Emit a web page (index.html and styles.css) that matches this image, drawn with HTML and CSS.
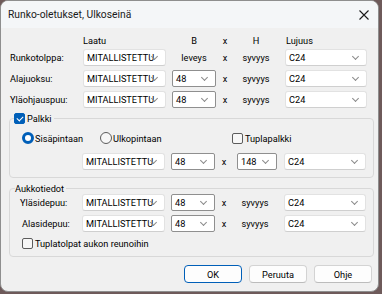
FILE: index.html
```html
<!DOCTYPE html>
<html>
<head>
  <title>Runko-oletukset, Ulkoseinä</title>
  <link rel="stylesheet" href="styles.css">
</head>
<body>
  <div class="window">
    <div class="titlebar">
      <span class="title">Runko-oletukset, Ulkoseinä</span>
      <svg class="close" width="10" height="10" viewBox="0 0 10 10">
        <path d="M0.5 0.5 L9.5 9.5 M9.5 0.5 L0.5 9.5" stroke="#1a1a1a" stroke-width="1.1" fill="none"/>
      </svg>
    </div>

    <div class="client">
      <div class="row head-row outer">
        <span></span>
        <span>Laatu</span>
        <span class="center b-col">B</span>
        <span class="center x-col">x</span>
        <span class="center h-col">H</span>
        <span class="head-lujuus">Lujuus</span>
      </div>

      <div class="row first outer">
        <span class="label">Runkotolppa:</span>
        <div class="combo">MITALLISTETTU<i class="chev"></i></div>
        <span class="center b-col">leveys</span>
        <span class="center x-col">x</span>
        <span class="center h-col">syvyys</span>
        <div class="c-col"><div class="combo">C24<i class="chev"></i></div></div>
      </div>

      <div class="row outer">
        <span class="label">Alajuoksu:</span>
        <div class="combo">MITALLISTETTU<i class="chev"></i></div>
        <div class="b-col"><div class="combo edit">48<i class="chev"></i></div></div>
        <span class="center x-col">x</span>
        <span class="center h-col">syvyys</span>
        <div class="c-col"><div class="combo">C24<i class="chev"></i></div></div>
      </div>

      <div class="row outer">
        <span class="label">Yläohjauspuu:</span>
        <div class="combo">MITALLISTETTU<i class="chev"></i></div>
        <div class="b-col"><div class="combo edit">48<i class="chev"></i></div></div>
        <span class="center x-col">x</span>
        <span class="center h-col">syvyys</span>
        <div class="c-col"><div class="combo">C24<i class="chev"></i></div></div>
      </div>

      <fieldset class="group group-palkki">
        <legend class="legend"><span class="check on"></span>Palkki</legend>
        <div class="options">
          <span class="opt opt-1"><span class="radio on"></span>Sisäpintaan</span>
          <span class="opt opt-2"><span class="radio"></span>Ulkopintaan</span>
          <span class="opt"><span class="check"></span>Tuplapalkki</span>
        </div>
        <div class="row palkki-row">
          <span></span>
          <div class="combo">MITALLISTETTU<i class="chev"></i></div>
          <div class="b-col"><div class="combo edit">48<i class="chev"></i></div></div>
          <span class="center x-col">x</span>
          <div class="combo edit">148<i class="chev"></i></div>
          <div class="c-col"><div class="combo">C24<i class="chev"></i></div></div>
        </div>
      </fieldset>

      <fieldset class="group group-aukko">
        <legend class="legend text-only">Aukkotiedot</legend>
        <div class="row first-in">
          <span class="label indent">Yläsidepuu:</span>
          <div class="combo">MITALLISTETTU<i class="chev"></i></div>
          <div class="b-col"><div class="combo edit">48<i class="chev"></i></div></div>
          <span class="center x-col">x</span>
          <span class="center h-col">syvyys</span>
          <div class="c-col"><div class="combo">C24<i class="chev"></i></div></div>
        </div>
        <div class="row">
          <span class="label indent2">Alasidepuu:</span>
          <div class="combo">MITALLISTETTU<i class="chev"></i></div>
          <div class="b-col"><div class="combo edit">48<i class="chev"></i></div></div>
          <span class="center x-col">x</span>
          <span class="center h-col">syvyys</span>
          <div class="c-col"><div class="combo">C24<i class="chev"></i></div></div>
        </div>
        <div class="tupla">
          <span class="opt"><span class="check"></span>Tuplatolpat aukon reunoihin</span>
        </div>
      </fieldset>

      <div class="buttons">
        <button class="btn default">OK</button>
        <button class="btn">Peruuta</button>
        <button class="btn">Ohje</button>
      </div>
    </div>
  </div>
</body>
</html>
```

FILE: styles.css
```css
* {
  margin: 0;
  padding: 0;
  box-sizing: border-box;
}

body {
  background: #6e5a5a;
  font-family: Roboto, "Liberation Sans", sans-serif;
  font-size: 9.2px;
  color: #000;
}

.window {
  width: 379px;
  height: 292px;
  background: #f0f0f0;
  border: 1px solid #8e8e8e;
  border-radius: 8px;
  overflow: hidden;
}

.titlebar {
  height: 27px;
  background: #f4f6f8;
  display: flex;
  align-items: center;
  justify-content: space-between;
  padding: 0 9px 0 7px;
}

.title {
  font-size: 10.3px;
  color: #1a1a1a;
}

.close {
  display: block;
}

.client {
  padding: 3px 0 0 8px;
}

/* form rows */
.row {
  display: grid;
  grid-template-columns: 72px 83px 50px 22px 40px 89px;
  align-items: center;
  height: 17px;
  margin-top: 4px;
}

.row.outer {
  grid-template-columns: 73px 83px 50px 22px 40px 89px;
  padding-left: 1px;
}

.head-row {
  height: 18px;
  margin-top: 0;
}

.row.first {
  margin-top: 0;
}

.label {
  white-space: nowrap;
}

.label.indent {
  padding-left: 10px;
}

.label.indent2 {
  padding-left: 12px;
}

.center {
  text-align: center;
}

.b-col {
  padding-left: 6px;
}

.x-col {
  padding-right: 4px;
}

.h-col {
  padding-right: 4px;
}

.head-lujuus {
  padding-left: 8px;
}

.c-col {
  padding-left: 7px;
}

.combo {
  position: relative;
  height: 17px;
  background: #fff;
  border: 1px solid #e2e2e2;
  border-bottom-color: #cfcfcf;
  border-radius: 3px;
  padding-left: 3px;
  line-height: 15px;
  white-space: nowrap;
}

.combo.edit {
  border: 1px solid #8f8f8f;
  border-radius: 2px;
}

.chev {
  position: absolute;
  right: 8px;
  top: 4px;
  width: 5px;
  height: 5px;
  border-right: 1px solid #8a8a8a;
  border-bottom: 1px solid #8a8a8a;
  transform: rotate(45deg);
}

/* group boxes */
.group {
  width: 365px;
  border: 1px solid #d8d8d8;
  border-radius: 4px;
  padding: 0 0 7px 0;
}

.group-palkki {
  margin-top: 3px;
}

.group-aukko {
  margin-top: 4px;
  padding-bottom: 6px;
}

.legend {
  display: flex;
  align-items: center;
  height: 14px;
  margin-left: 4px;
  padding-right: 2px;
}

.legend.text-only {
  height: 12px;
  margin-left: 5px;
}

.options {
  display: flex;
  align-items: center;
  height: 14px;
  margin-top: 6px;
  padding-left: 12px;
}

.opt {
  display: flex;
  align-items: center;
  white-space: nowrap;
}

.opt-1 {
  width: 78px;
}

.opt-2 {
  width: 132px;
}

.palkki-row {
  margin-top: 8px;
}

.first-in {
  margin-top: 0;
}

.tupla {
  display: flex;
  height: 14px;
  margin-top: 4px;
  padding-left: 12px;
}

.check {
  width: 11px;
  height: 11px;
  border: 1px solid #5c5c5c;
  border-radius: 2px;
  background: #f7f7f7;
  margin-right: 2px;
  position: relative;
}

.check.on {
  background: #005fb8;
  border-color: #005fb8;
}

.check.on::after {
  content: '';
  position: absolute;
  left: 3px;
  top: 1px;
  width: 3px;
  height: 5px;
  border-right: 1px solid #fff;
  border-bottom: 1px solid #fff;
  transform: rotate(45deg);
}

.radio {
  width: 12px;
  height: 12px;
  border: 1px solid #5c5c5c;
  border-radius: 50%;
  background: #f7f7f7;
  margin-right: 1px;
}

.radio.on {
  border: 3.5px solid #005fb8;
  background: #fff;
}

/* buttons */
.buttons {
  display: flex;
  justify-content: flex-end;
  gap: 7px;
  width: 363px;
  margin-top: 8px;
}

.btn {
  width: 58px;
  height: 18px;
  font-family: inherit;
  font-size: 9.2px;
  color: #000;
  background: #fdfdfd;
  border: 1px solid #d3d3d3;
  border-bottom-color: #bcbcbc;
  border-radius: 4px;
}

.btn.default {
  border: 1px solid #005fb8;
}
```
